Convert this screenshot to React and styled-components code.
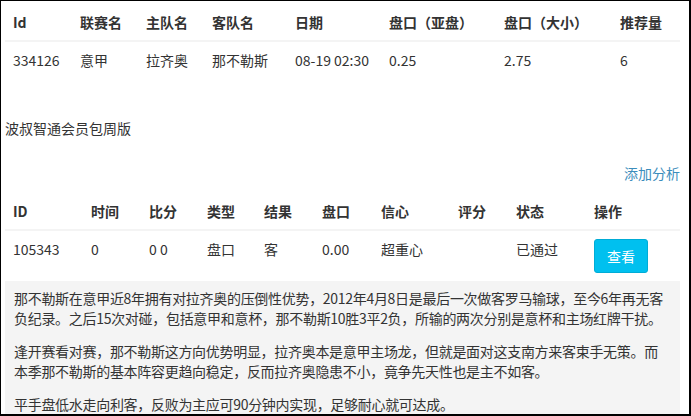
import React from 'react'
import styled, { createGlobalStyle } from 'styled-components'

const GlobalStyle = createGlobalStyle`
  html, body {
    margin: 0;
    padding: 0;
    background: #fff;
  }
  body {
    font-family: "Noto Sans CJK SC", "Liberation Sans", sans-serif;
    font-size: 14px;
    line-height: 20px;
    color: #333;
  }
`

const matchCols = [67, 66, 66, 83, 94, 115, 116, 68]
const matchHead = ['Id', '联赛名', '主队名', '客队名', '日期', '盘口（亚盘）', '盘口（大小）', '推荐量']
const matchRow = ['334126', '意甲', '拉齐奥', '那不勒斯', '08-19 02:30', '0.25', '2.75', '6']

const tipCols = [78, 58, 58, 57, 58, 59, 77, 58, 78, 94]
const tipHead = ['ID', '时间', '比分', '类型', '结果', '盘口', '信心', '评分', '状态', '操作']
const tipRow = ['105343', '0', '0 0', '盘口', '客', '0.00', '超重心', '', '已通过']

const analysis = [
  '那不勒斯在意甲近8年拥有对拉齐奥的压倒性优势，2012年4月8日是最后一次做客罗马输球，至今6年再无客负纪录。之后15次对碰，包括意甲和意杯，那不勒斯10胜3平2负，所输的两次分别是意杯和主场红牌干扰。',
  '逢开赛看对赛，那不勒斯这方向优势明显，拉齐奥本是意甲主场龙，但就是面对这支南方来客束手无策。而本季那不勒斯的基本阵容更趋向稳定，反而拉齐奥隐患不小，竟争先天性也是主不如客。',
  '平手盘低水走向利客，反败为主应可90分钟内实现，足够耐心就可达成。',
]

const App = () => {
  return (
    <>
      <GlobalStyle />
      <Frame>
        <Table $gap={40}>
          <colgroup>
            {matchCols.map((w, i) => <col key={i} style={{ width: w }} />)}
          </colgroup>
          <thead>
            <tr>{matchHead.map(h => <Th key={h}>{h}</Th>)}</tr>
          </thead>
          <tbody>
            <tr>{matchRow.map((c, i) => <Td key={i}>{c}</Td>)}</tr>
          </tbody>
        </Table>

        <PlanTitle>波叔智通会员包周版</PlanTitle>

        <Actions>
          <AddLink href="#">添加分析</AddLink>
        </Actions>

        <Table $gap={0}>
          <colgroup>
            {tipCols.map((w, i) => <col key={i} style={{ width: w }} />)}
          </colgroup>
          <thead>
            <tr>{tipHead.map(h => <Th key={h}>{h}</Th>)}</tr>
          </thead>
          <tbody>
            <tr>
              {tipRow.map((c, i) => <Td key={i}>{c}</Td>)}
              <Td>
                <ViewButton>查看</ViewButton>
              </Td>
            </tr>
          </tbody>
        </Table>

        <Analysis>
          {analysis.map((p, i) => <p key={i}>{p}</p>)}
        </Analysis>
      </Frame>
    </>
  )
}

const Frame = styled.div`
  box-sizing: border-box;
  width: 691px;
  height: 416px;
  overflow: hidden;
  border: solid #000;
  border-width: 1px 2px 2px 1px;
  padding: 3px 9px 0 4px;
`

const Table = styled.table`
  width: 100%;
  table-layout: fixed;
  border-collapse: collapse;
  border-spacing: 0;
  margin-bottom: ${p => p.$gap}px;
`

const Th = styled.th`
  padding: 8px;
  text-align: left;
  font-weight: bold;
  white-space: nowrap;
  vertical-align: bottom;
  border-bottom: 2px solid #f4f4f4;
`

const Td = styled.td`
  padding: 8px;
  vertical-align: top;
  white-space: nowrap;
`

const PlanTitle = styled.div`
  font-size: 14px;
  color: #333;
  margin-bottom: 25px;
`

const Actions = styled.div`
  display: flex;
  justify-content: flex-end;
  margin-bottom: 10px;
`

const AddLink = styled.a`
  color: #3c8dbc;
  text-decoration: none;
  font-size: 14px;
`

const ViewButton = styled.button`
  font-family: inherit;
  font-size: 14px;
  line-height: 20px;
  color: #fff;
  background: #00c0ef;
  border: 1px solid #00acd6;
  border-radius: 3px;
  padding: 6px 12px;
  cursor: pointer;
  margin-top: 0;
`

const Analysis = styled.div`
  background: #f4f4f4;
  padding: 7px 10px 1px 9px;
  letter-spacing: -0.3px;

  p {
    margin: 0 0 13px;
  }
`

export default App
